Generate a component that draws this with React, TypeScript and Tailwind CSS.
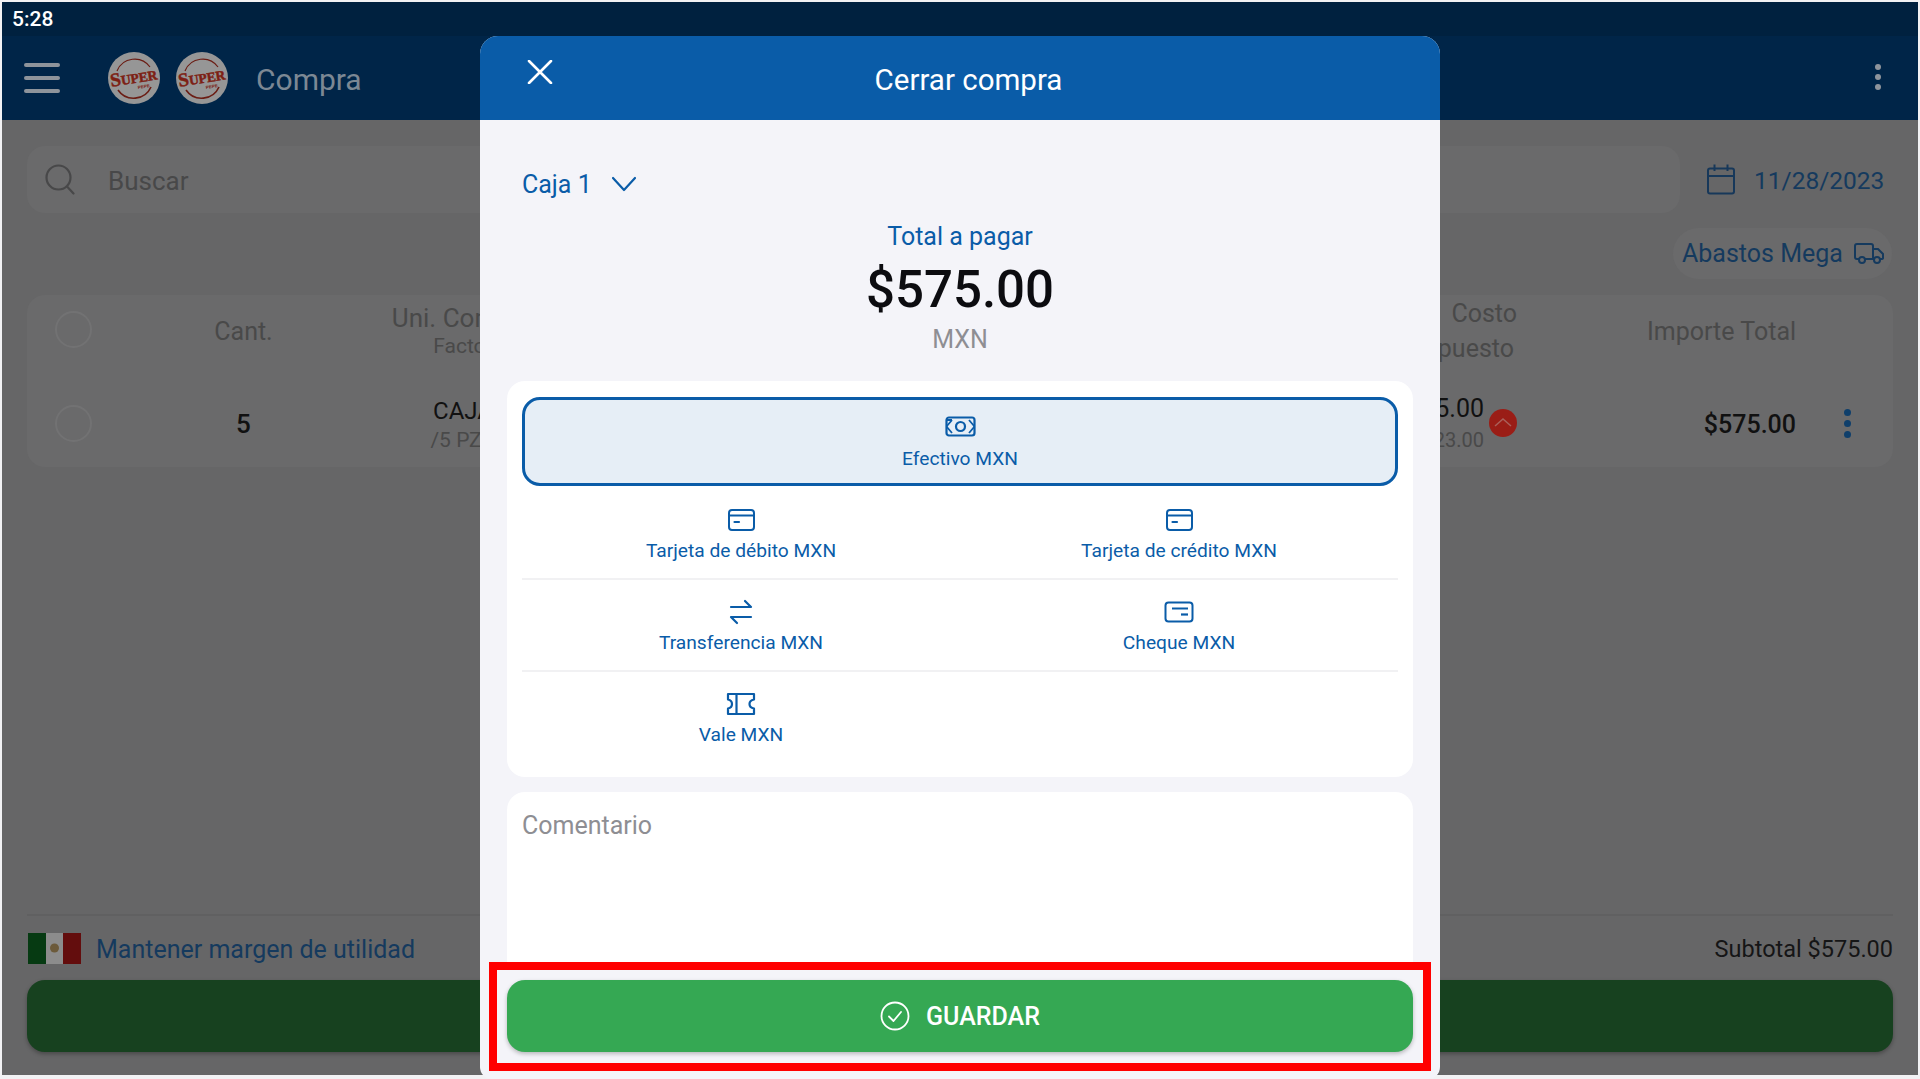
import React from "react";

const blue = "#0a5ca8";

function Logo() {
  return (
    <svg width="52" height="52" viewBox="0 0 52 52" className="shrink-0">
      <circle cx="26" cy="26" r="26" fill="#969696" />
      <path d="M9 19 A19 19 0 0 1 42 15" fill="none" stroke="#6b1d14" strokeWidth="1.2" />
      <path d="M43 35 A19 19 0 0 1 10 38" fill="none" stroke="#6b1d14" strokeWidth="1.6" />
      <text x="26" y="31" textAnchor="middle" transform="rotate(-9 26 27)" fill="#7d1f14" fontFamily="'Liberation Serif', serif" fontWeight="700" fontSize="13.5" stroke="#7d1f14" strokeWidth="0.5">
        <tspan fontSize="19">S</tspan>UPER
      </text>
      <text x="36" y="36" textAnchor="middle" transform="rotate(-9 36 36)" fill="#7d1f14" fontFamily="'Liberation Sans', sans-serif" fontWeight="700" fontSize="4.5">PEPE</text>
    </svg>
  );
}

function PayOption({ label, icon, border }: { label: string; icon: React.ReactNode; border?: boolean }) {
  return (
    <div className={`flex h-[92px] flex-col items-center pt-[19px] ${border ? "border-b-2 border-[#f1f1f3]" : ""}`}>
      <div className="flex h-[26px] items-center justify-center">{icon}</div>
      <div className="mt-[5px] text-[19.2px] leading-[26px] text-[#0a5ca8]">{label}</div>
    </div>
  );
}

const CardIcon = () => (
  <svg width="29" height="24" viewBox="0 0 29 24" fill="none" stroke={blue} strokeWidth="2">
    <rect x="2" y="2" width="25" height="20" rx="3" />
    <path d="M2 7.5H27" />
    <path d="M7.5 14H12" strokeLinecap="round" strokeWidth="2.2" />
  </svg>
);

const TransferIcon = () => (
  <svg width="24" height="26" viewBox="0 0 24 26" fill="none" stroke={blue} strokeWidth="2.2" strokeLinecap="round" strokeLinejoin="round">
    <path d="M2 8H22L16 2" />
    <path d="M22 18H2L8 24" />
  </svg>
);

const ChequeIcon = () => (
  <svg width="30" height="22" viewBox="0 0 30 22" fill="none" stroke={blue} strokeWidth="2">
    <rect x="1.5" y="1.5" width="27" height="19" rx="3" />
    <path d="M8 7.5H24" />
    <path d="M17 13.5H24" strokeWidth="2.2" />
  </svg>
);

const ValeIcon = () => (
  <svg width="30" height="24" viewBox="0 0 30 24" fill="none" stroke={blue} strokeWidth="2.2" strokeLinejoin="round">
    <path d="M2 2H28V7.5C25.5 8 23.5 9.5 23.5 12C23.5 14.5 25.5 16 28 16.5V22H2V16.5C4.5 16 6 14.5 6 12C6 9.5 4.5 8 2 7.5Z" />
    <path d="M10.5 2V22" />
  </svg>
);

const CashIcon = () => (
  <svg width="31" height="21" viewBox="0 0 31 21" fill="none" stroke={blue} strokeWidth="2.2" strokeLinejoin="round">
    <rect x="1.5" y="1.5" width="28" height="18" rx="2.5" />
    <circle cx="15.5" cy="10.5" r="4.5" />
    <path d="M1.5 10.5L7 4M7 4H2M1.5 10.5L7 17M29.5 10.5L24 4M29.5 10.5L24 17" strokeWidth="1.8" />
  </svg>
);

export default function App() {
  return (
    <div className="relative h-[1079px] w-[1920px] overflow-hidden bg-[#f2f2f4] pl-[2px] pt-[2px] font-['Roboto',sans-serif]">
      {/* Underlying page */}
      <div className="flex h-[1073px] w-[1916px] flex-col">
        <div className="flex h-[34px] shrink-0 items-center bg-[#00213f] pl-[10px] pt-[1px] text-[21px] font-medium text-white">5:28</div>
        <div className="flex h-[84px] shrink-0 items-center bg-[#002548] pl-[22px] pr-[37px]">
          <div className="flex h-[30px] w-[36px] flex-col justify-between">
            <div className="h-[4px] rounded-full bg-[#8e949b]" />
            <div className="h-[4px] rounded-full bg-[#8e949b]" />
            <div className="h-[4px] rounded-full bg-[#8e949b]" />
          </div>
          <div className="ml-[48px] flex gap-[16px]">
            <Logo />
            <Logo />
          </div>
          <div className="ml-[28px] pt-[4px] text-[30px] leading-[36px] text-[#7c8894]">Compra</div>
          <div className="mb-[3px] ml-auto flex flex-col gap-[4px]">
            <div className="h-[6px] w-[6px] rounded-full bg-[#8e949b]" />
            <div className="h-[6px] w-[6px] rounded-full bg-[#8e949b]" />
            <div className="h-[6px] w-[6px] rounded-full bg-[#8e949b]" />
          </div>
        </div>

        <div className="flex min-h-0 flex-1 flex-col bg-[#666667] px-[25px] pt-[26px]">
          <div className="flex h-[67px] shrink-0 items-center">
            <div className="flex h-[67px] w-[1653px] items-center rounded-[18px] bg-[#6a6a6b] pl-[18px]">
              <svg width="30" height="31" viewBox="0 0 30 31" fill="none" stroke="#484849" strokeWidth="2.2" strokeLinecap="round">
                <circle cx="13.5" cy="13.5" r="12" />
                <path d="M22.5 23L28.5 29.5" />
              </svg>
              <div className="ml-[33px] pt-[3px] text-[26px] text-[#484849]">Buscar</div>
            </div>
            <div className="ml-[27px] flex items-center">
              <svg width="28" height="31" viewBox="0 0 28 31" fill="none" stroke="#17385a" strokeWidth="2">
                <rect x="1" y="4.5" width="26" height="25" rx="2" />
                <path d="M1 12H27M7.5 0.5V7M20.5 0.5V7" />
              </svg>
              <div className="ml-[19px] pt-[3px] text-[24.5px] text-[#153a5e]">11/28/2023</div>
            </div>
          </div>

          <div className="mt-[15px] flex h-[51px] shrink-0 justify-end pr-[1px]">
            <div className="flex w-[219px] items-center rounded-full bg-[#6a6a6b] pl-[9px]">
              <div className="whitespace-nowrap pt-[1px] text-[25px] leading-[32px] text-[#153a5e]">Abastos Mega</div>
              <svg className="ml-[11px] shrink-0" width="30" height="21" viewBox="0 0 30 21" fill="none" stroke="#153a5e" strokeWidth="2">
                <path d="M5 16H3C2 16 1 15 1 14V3C1 2 2 1 3 1H17C18 1 19 2 19 3V16H11" />
                <path d="M19 6H24L29 11V15C29 16 28 16 27 16H26" />
                <circle cx="8" cy="17" r="3" />
                <circle cx="23" cy="17" r="3" />
              </svg>
            </div>
          </div>

          <div className="mt-[16px] h-[172px] shrink-0 rounded-[18px] bg-[#6a6a6b]">
            <div className="flex h-[72px] items-center pl-[28px]">
              <div className="mb-[4px] h-[37px] w-[37px] shrink-0 rounded-full border-2 border-[#727273]" />
              <div className="w-[303px] pt-[2px] text-center text-[25px] text-[#494949]">Cant.</div>
              <div className="flex w-[136px] flex-col items-center whitespace-nowrap">
                <div className="text-[26px] leading-[30px] text-[#494949]">Uni. Compra</div>
                <div className="text-[21px] leading-[26px] text-[#494949]">Factor</div>
              </div>
              <div className="flex-1" />
              <div className="w-[160px] text-right text-[25px] leading-[35px] text-[#494949]">
                <div>Costo</div>
                <div className="pr-[3px]">Impuesto</div>
              </div>
              <div className="w-[279px] pl-[130px] pt-[2px] text-right text-[25px] whitespace-nowrap text-[#494949]">Importe Total</div>
              <div className="w-[97px]" />
            </div>
            <div className="mt-[20px] flex h-[72px] items-center pl-[28px]">
              <div className="h-[37px] w-[37px] shrink-0 rounded-full border-2 border-[#727273]" />
              <div className="w-[303px] pt-[3px] text-center text-[26px] font-medium text-[#111111]">5</div>
              <div className="flex w-[136px] flex-col items-center whitespace-nowrap pt-[3px]">
                <div className="text-[24px] leading-[30px] text-[#111111]">CAJA</div>
                <div className="text-[21px] leading-[28px] text-[#494949]">/5 PZA</div>
              </div>
              <div className="flex-1" />
              <div className="flex w-[160px] items-center justify-end">
                <div className="text-right">
                  <div className="text-[25px] leading-[30px] text-[#111111]">$115.00</div>
                  <div className="mt-[3px] text-[20px] leading-[26px] text-[#494949]">$23.00</div>
                </div>
                <svg className="ml-[5px]" width="28" height="28" viewBox="0 0 28 28">
                  <circle cx="14" cy="14" r="14" fill="#9a1d16" />
                  <path d="M6 17L14 10L22 17" fill="none" stroke="#a9605a" strokeWidth="1.5" />
                </svg>
              </div>
              <div className="w-[279px] pt-[3px] text-right text-[25px] font-medium text-[#111111]">$575.00</div>
              <div className="flex w-[97px] flex-col items-center gap-[4px] pl-[5px]">
                <div className="h-[7px] w-[7px] rounded-full bg-[#0f3f6b]" />
                <div className="h-[7px] w-[7px] rounded-full bg-[#0f3f6b]" />
                <div className="h-[7px] w-[7px] rounded-full bg-[#0f3f6b]" />
              </div>
            </div>
          </div>

          <div className="mt-auto shrink-0 border-t-2 border-[#606061]">
            <div className="mt-[17px] flex h-[31px] items-center">
              <svg width="53" height="31" viewBox="0 0 53 31" className="ml-[1px]">
                <rect width="18" height="31" fill="#063a12" />
                <rect x="18" width="17" height="31" fill="#8c8c8c" />
                <rect x="35" width="18" height="31" fill="#630d0d" />
                <circle cx="26.5" cy="15" r="4.5" fill="#6c5a3a" />
              </svg>
              <div className="ml-[15px] pt-[3px] text-[25px] text-[#153a5e]">Mantener margen de utilidad</div>
              <div className="ml-auto pt-[3px] text-[23.5px] text-[#151516]">Subtotal $575.00</div>
            </div>
            <div className="mb-[23px] mt-[16px] h-[72px] rounded-[18px] bg-[#17411f] shadow-[0_2px_4px_rgba(0,0,0,0.3)]" />
          </div>
        </div>
      </div>

      {/* Modal */}
      <div className="absolute bottom-0 left-[480px] top-[36px] flex w-[960px] flex-col overflow-hidden rounded-b-[12px] rounded-t-[18px] bg-[#f4f4f9]">
        <div className="relative flex h-[84px] shrink-0 items-center justify-center bg-[#0a5ca8] pl-[17px]">
          <svg className="absolute left-[47px] top-[24px]" width="26" height="24" viewBox="0 0 26 24" fill="none" stroke="#ffffff" strokeWidth="2.6" strokeLinecap="round">
            <path d="M2 1L24 23M24 1L2 23" />
          </svg>
          <div className="pt-[4px] text-[29.5px] leading-[36px] text-white">Cerrar compra</div>
        </div>

        <div className="flex min-h-0 flex-1 flex-col px-[27px]">
          <div className="mt-[46px] flex h-[36px] shrink-0 items-center pl-[15px]">
            <div className="pt-[1px] text-[25px] text-[#0a5ca8]">Caja 1</div>
            <svg className="ml-[19px]" width="26" height="16" viewBox="0 0 26 16" fill="none" stroke={blue} strokeWidth="2.2" strokeLinecap="round" strokeLinejoin="round">
              <path d="M2 2L13 14L24 2" />
            </svg>
          </div>

          <div className="mt-[19px] shrink-0 text-center text-[25px] leading-[32px] text-[#0a5ca8]">Total a pagar</div>
          <div className="mt-[7px] shrink-0 text-center text-[51px] font-medium leading-[60px] text-[#0c0c10]">$575.00</div>
          <div className="mt-[3px] shrink-0 text-center text-[25px] leading-[34px] text-[#8e8e93]">MXN</div>

          <div className="mt-[24px] h-[396px] shrink-0 rounded-[18px] bg-white px-[15px] pt-[16px]">
            <div className="flex h-[89px] flex-col items-center rounded-[18px] border-[3px] border-[#0a5ca8] bg-[#e6eef6] pt-[16px]">
              <CashIcon />
              <div className="mt-[9px] text-[19.2px] leading-[26px] text-[#0a5ca8]">Efectivo MXN</div>
            </div>
            <div className="mt-[2px] grid grid-cols-2">
              <PayOption label="Tarjeta de débito MXN" icon={<CardIcon />} border />
              <PayOption label="Tarjeta de crédito MXN" icon={<CardIcon />} border />
              <PayOption label="Transferencia MXN" icon={<TransferIcon />} border />
              <PayOption label="Cheque MXN" icon={<ChequeIcon />} border />
              <PayOption label="Vale MXN" icon={<ValeIcon />} />
            </div>
          </div>

          <div className="mt-[15px] min-h-0 flex-1 rounded-t-[18px] bg-white px-[15px] pt-[16px] text-[25px] leading-[36px] text-[#8e8e93]">Comentario</div>

          <div className="flex h-[113px] shrink-0 items-start pt-[14px]">
            <div className="flex h-[72px] w-full items-center justify-center rounded-[18px] bg-[#35a853] shadow-[0_2px_4px_rgba(0,0,0,0.25)]">
              <svg width="30" height="30" viewBox="0 0 30 30" fill="none" stroke="#ffffff" strokeWidth="1.8" strokeLinecap="round" strokeLinejoin="round">
                <circle cx="15" cy="15" r="13.5" />
                <path d="M9 15.5L13.5 20L21 11" />
              </svg>
              <div className="ml-[16px] pt-[2px] text-[25px] font-medium text-white">GUARDAR</div>
            </div>
          </div>
        </div>
      </div>

      {/* Red annotation */}
      <div className="absolute left-[489px] top-[962px] h-[109px] w-[942px] border-[8px] border-[#ff0000]" />
    </div>
  );
}
